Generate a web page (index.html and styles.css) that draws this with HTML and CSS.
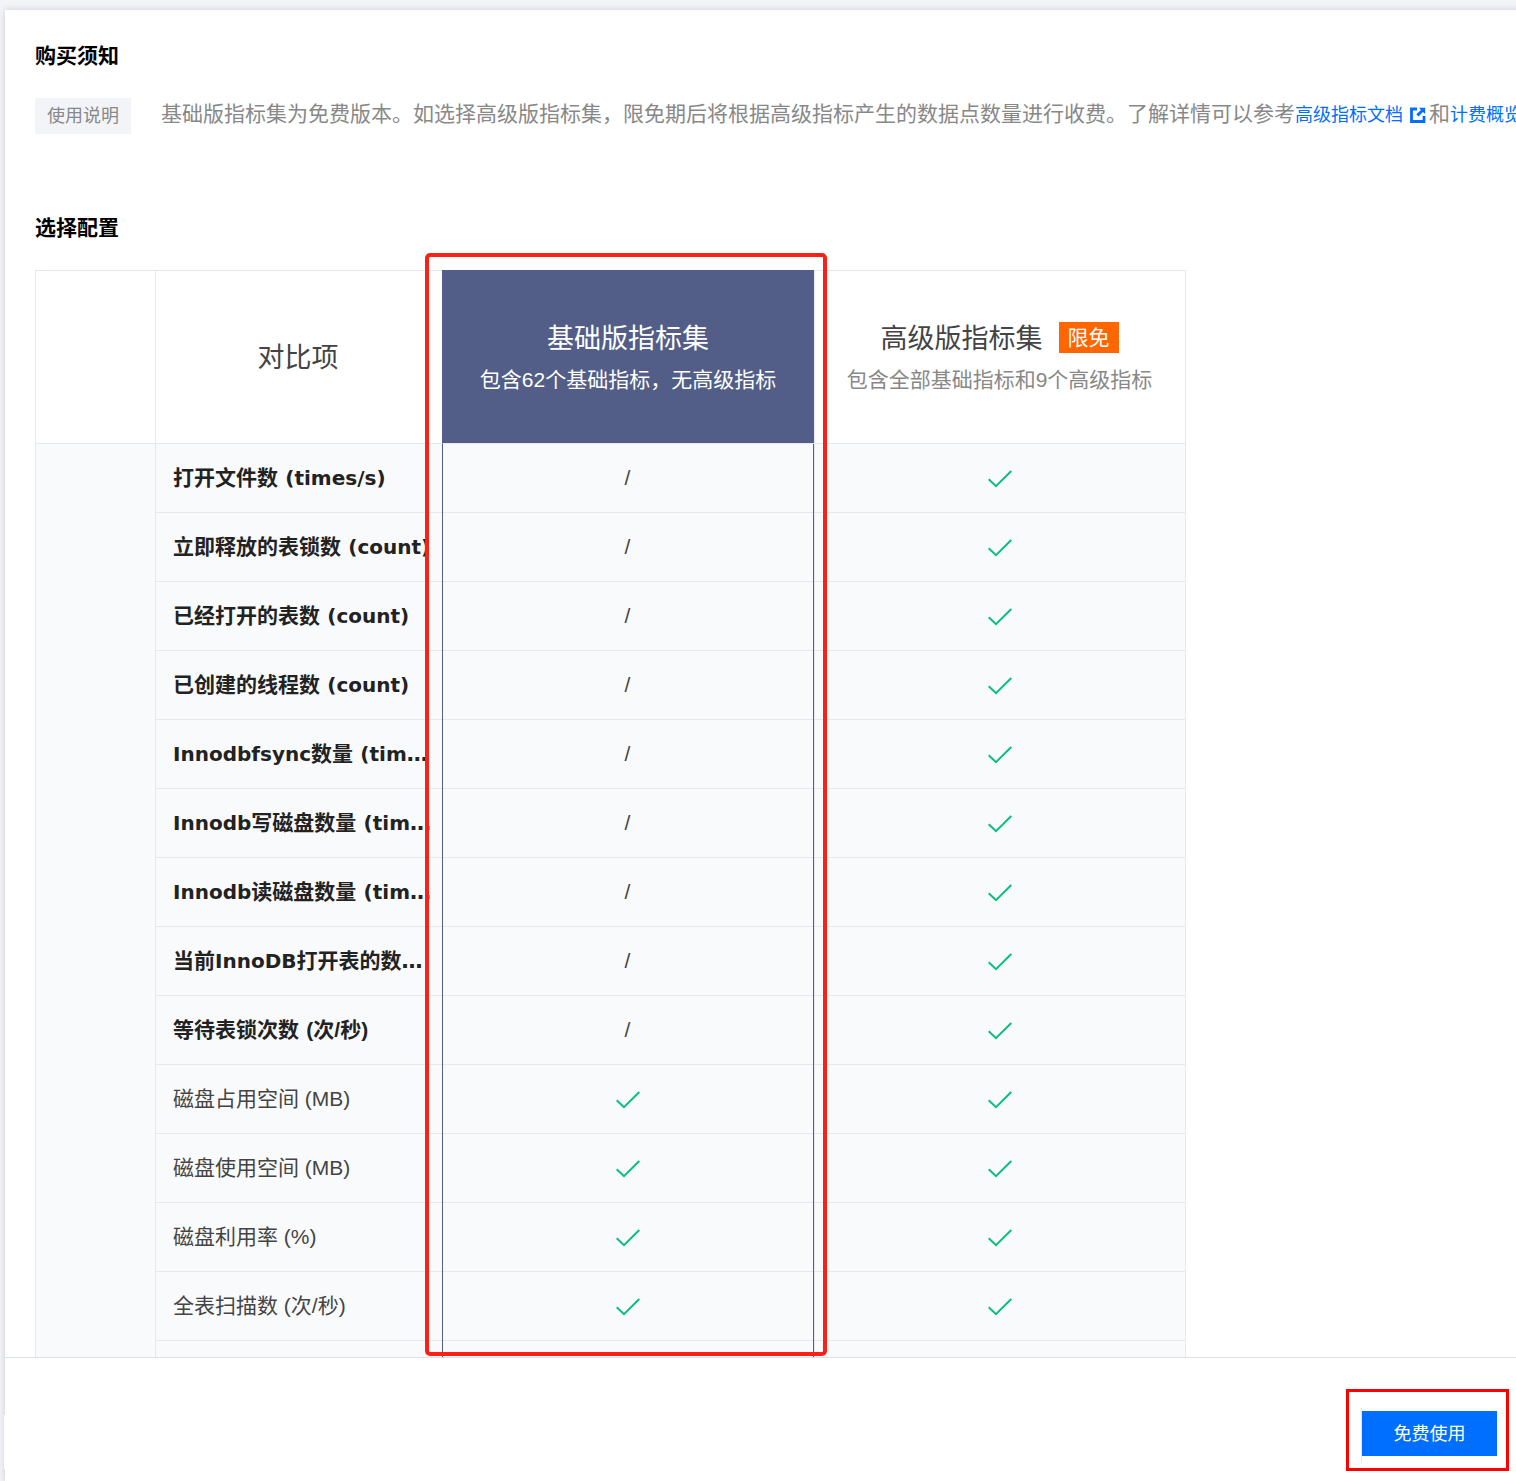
FILE: index.html
```html
<!DOCTYPE html>
<html lang="zh">
<head>
<meta charset="utf-8">
<title>购买须知</title>
<link rel="stylesheet" href="styles.css">
</head>
<body>
<svg class="defs" width="0" height="0" aria-hidden="true"><defs><symbol id="ok" viewBox="0 0 24 24"><path d="M.7 12.2 8 19.2 23.3 4" fill="none" stroke="currentColor" stroke-width="2"/></symbol></defs></svg>
<div class="panel">
  <main class="content">
    <h2 class="title">购买须知</h2>
    <div class="notice">
      <span class="tag">使用说明</span>
      <p class="desc">基础版指标集为免费版本。如选择高级版指标集，限免期后将根据高级指标产生的数据点数量进行收费。了解详情可以参考<a class="link">高级指标文档<svg class="ext" viewBox="0 0 16 16"><path d="M7 2H1.500v12.500H14V9" fill="none" stroke="currentColor" stroke-width="2.800"/><path d="M9 .8h6.200V7L12.900 4.900 8.500 9.500 6.300 7.300 11 2.900Z" fill="currentColor"/></svg></a>和<a class="link">计费概览</a></p>
    </div>
    <h2 class="title second">选择配置</h2>
    <table class="grid">
      <colgroup><col class="c1"><col class="c2"><col class="c3"><col class="c4"></colgroup>
      <thead>
        <tr>
          <th class="blank"></th>
          <th class="head-name">对比项</th>
          <th class="plan active"><div class="plan-name">基础版指标集</div><div class="plan-sub">包含62个基础指标，无高级指标</div></th>
          <th class="plan"><div class="plan-name">高级版指标集<span class="badge">限免</span></div><div class="plan-sub">包含全部基础指标和9个高级指标</div></th>
        </tr>
      </thead>
      <tbody>
        <tr><td class="side" rowspan="14"></td><td class="name strong"><div>打开文件数 <span class="lat">(times/s)</span></div></td><td class="val hl">/</td><td class="val"><svg class="ok"><use href="#ok"/></svg></td></tr>
        <tr><td class="name strong"><div>立即释放的表锁数 <span class="lat">(count)</span></div></td><td class="val hl">/</td><td class="val"><svg class="ok"><use href="#ok"/></svg></td></tr>
        <tr><td class="name strong"><div>已经打开的表数 <span class="lat">(count)</span></div></td><td class="val hl">/</td><td class="val"><svg class="ok"><use href="#ok"/></svg></td></tr>
        <tr><td class="name strong"><div>已创建的线程数 <span class="lat">(count)</span></div></td><td class="val hl">/</td><td class="val"><svg class="ok"><use href="#ok"/></svg></td></tr>
        <tr><td class="name strong"><div><span class="lat">Innodbfsync</span>数量 <span class="lat">(times/s)</span></div></td><td class="val hl">/</td><td class="val"><svg class="ok"><use href="#ok"/></svg></td></tr>
        <tr><td class="name strong"><div><span class="lat">Innodb</span>写磁盘数量 <span class="lat">(times/s)</span></div></td><td class="val hl">/</td><td class="val"><svg class="ok"><use href="#ok"/></svg></td></tr>
        <tr><td class="name strong"><div><span class="lat">Innodb</span>读磁盘数量 <span class="lat">(times/s)</span></div></td><td class="val hl">/</td><td class="val"><svg class="ok"><use href="#ok"/></svg></td></tr>
        <tr><td class="name strong"><div>当前<span class="lat">InnoDB</span>打开表的数量 <span class="lat">(count)</span></div></td><td class="val hl">/</td><td class="val"><svg class="ok"><use href="#ok"/></svg></td></tr>
        <tr><td class="name strong"><div>等待表锁次数 <span class="std">(次/秒)</span></div></td><td class="val hl">/</td><td class="val"><svg class="ok"><use href="#ok"/></svg></td></tr>
        <tr><td class="name"><div>磁盘占用空间 (MB)</div></td><td class="val hl"><svg class="ok"><use href="#ok"/></svg></td><td class="val"><svg class="ok"><use href="#ok"/></svg></td></tr>
        <tr><td class="name"><div>磁盘使用空间 (MB)</div></td><td class="val hl"><svg class="ok"><use href="#ok"/></svg></td><td class="val"><svg class="ok"><use href="#ok"/></svg></td></tr>
        <tr><td class="name"><div>磁盘利用率 (%)</div></td><td class="val hl"><svg class="ok"><use href="#ok"/></svg></td><td class="val"><svg class="ok"><use href="#ok"/></svg></td></tr>
        <tr><td class="name"><div>全表扫描数 (次/秒)</div></td><td class="val hl"><svg class="ok"><use href="#ok"/></svg></td><td class="val"><svg class="ok"><use href="#ok"/></svg></td></tr>
        <tr><td class="name"></td><td class="val hl"></td><td class="val"></td></tr>
      </tbody>
    </table>
  </main>
  <footer class="footer"><button class="primary">免费使用</button></footer>
</div>
<div class="mark mark-col"></div>
<div class="mark mark-btn"></div>
<div class="patch"></div>
</body>
</html>
```
FILE: styles.css
```css
* { box-sizing: border-box; }
html, body { margin: 0; height: 1481px; overflow: hidden; }
body {
  position: relative;
  background: #f2f4f8;
  padding: 10px 0 0 5px;
  font-family: "Liberation Sans", "Noto Sans CJK SC", sans-serif;
  font-size: 21px;
  color: #444;
}
.defs { position: absolute; }
.panel {
  width: 1600px;
  height: 1471px;
  background: #fff;
  box-shadow: 0 0 6px rgba(54, 58, 80, .22);
  display: flex;
  flex-direction: column;
}
.content { height: 1347px; overflow: hidden; padding: 31px 0 0 30px; }
.title { margin: 0; font-size: 21px; line-height: 30px; font-weight: 700; color: #000; }
.title.second { margin-top: 79px; }
.notice { display: flex; align-items: flex-start; margin-top: 27px; white-space: nowrap; }
.tag {
  width: 96px; height: 36px; flex: none;
  background: #f2f4f8; color: #888;
  font-size: 18px; line-height: 36px; text-align: center;
}
.desc { margin: 0 0 0 30px; line-height: 31px; color: #888; }
.link { color: #006eff; font-size: 18px; }
.ext { width: 16px; height: 16px; margin: 0 3px 0 7px; vertical-align: -2px; }
.grid {
  width: 1151px;
  margin-top: 27px;
  table-layout: fixed;
  border-collapse: separate;
  border-spacing: 0;
  border-top: 1px solid #e5e8ef;
  border-right: 1px solid #e5e8ef;
}
.c1 { width: 120px; }
.c2 { width: 287px; }
.c3 { width: 372px; }
.c4 { width: 371px; }
th, td { padding: 0; border-left: 1px solid #e5e8ef; border-bottom: 1px solid #e5e8ef; }
thead tr { height: 173px; }
tbody tr { height: 69px; }
th { font-weight: 400; background: #fff; }
.head-name { font-size: 27px; color: #444; padding: 0 2px 4px 0; }
.plan { text-align: center; vertical-align: top; padding: 50px 1px 0 0; }
.plan-name { font-size: 27px; line-height: 36px; color: #444; display: flex; justify-content: center; align-items: flex-start; }
.plan-sub { font-size: 21px; line-height: 28px; margin-top: 9px; color: #888; }
.badge {
  margin: 1px 0 0 16px; width: 60px; height: 31px;
  background: #ff6600; color: #fff;
  font-size: 21px; line-height: 31px;
}
.plan.active { background: #525e87; border-left-color: #525e87; position: relative; }
.plan.active::before { content: ""; position: absolute; left: -1px; right: 0; top: -1px; height: 1px; background: #525e87; }
.plan.active .plan-name, .plan.active .plan-sub { color: #fff; }
tbody td { background: #f9fafc; }
.name { padding: 0 8px 0 17px; color: #444; }
.name div { white-space: nowrap; overflow: hidden; text-overflow: ellipsis; line-height: 30px; }
.strong { font-weight: 700; color: #222; }
.strong div { font-family: "DejaVu Sans", "Noto Sans CJK SC", sans-serif; }
.lat { font-size: 20px; }
.std { font-family: "Liberation Sans", "Noto Sans CJK SC", sans-serif; }
.val { text-align: center; color: #444; }
.hl { position: relative; padding-right: 2px; }
.hl::before {
  content: ""; position: absolute; top: 0; right: 0; bottom: -1px; left: -1px;
  border-left: 1px solid #525e87; border-right: 1px solid #525e87;
}
.ok { display: block; width: 24px; height: 24px; margin: 2px auto 0; color: #0abf7b; }
.footer {
  flex: 1;
  border-top: 1px solid #dde1e6;
  padding: 53px 0 0 1357px;
}
.primary {
  display: block;
  width: 135px; height: 45px;
  padding: 0 0 3px; border: 0;
  background: #006eff; color: #fff;
  font: inherit; font-size: 18px;
}
.mark { position: absolute; border-style: solid; }
.mark-col { left: 425px; top: 253px; width: 402px; height: 1103px; border-width: 4px; border-color: #ff2015; border-radius: 5px; }
.mark-btn { left: 1346px; top: 1389px; width: 163px; height: 82px; border-width: 3px; border-color: #f00; }
.mark-btn::before { content: ""; position: absolute; left: 12px; top: 16px; width: 1px; height: 54px; background: #e5e5e5; }
.patch { position: absolute; left: 4px; top: 1415px; width: 2px; height: 54px; background: #fff; }
```
